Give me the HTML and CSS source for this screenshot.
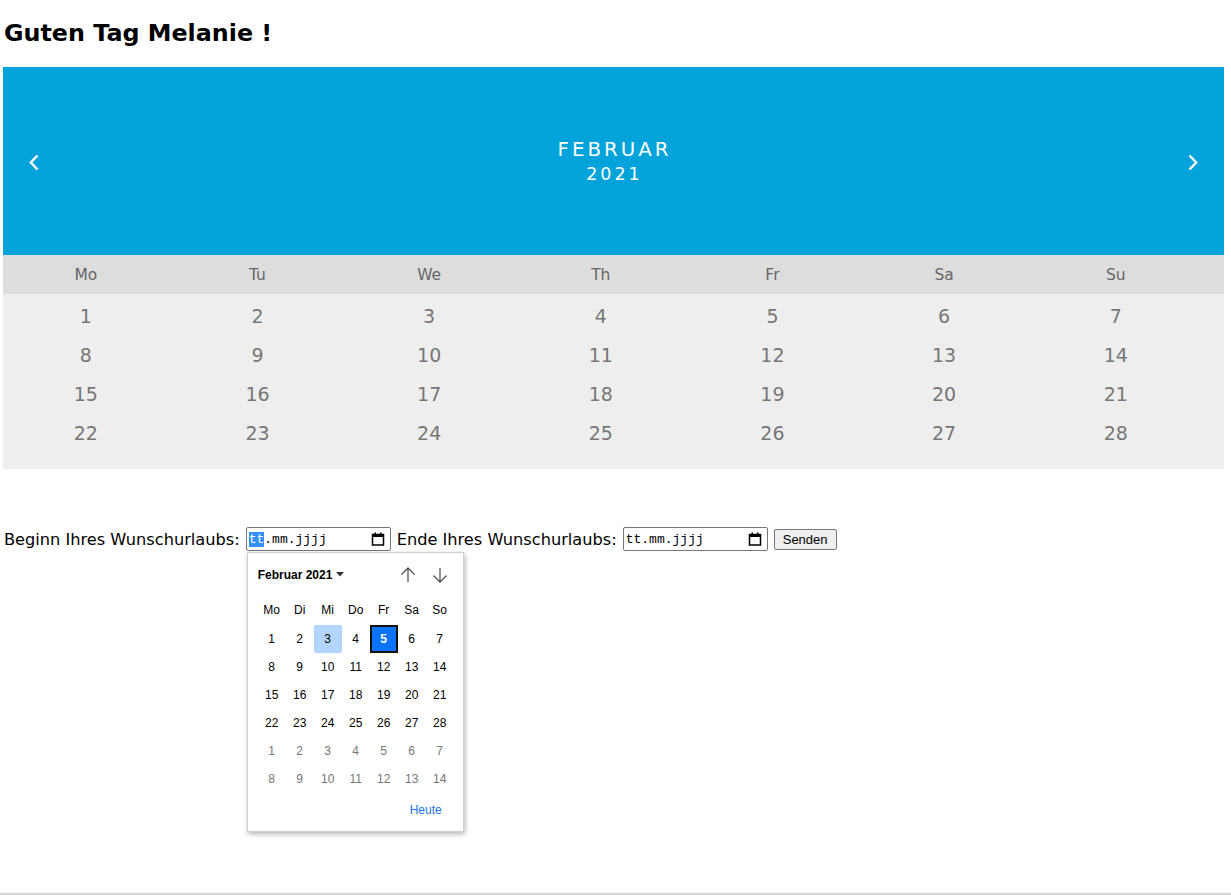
FILE: index.html
```html
<!DOCTYPE html>
<html lang="de">
<head>
<meta charset="utf-8">
<title>Kalender</title>
<link rel="stylesheet" href="styles.css">
</head>
<body>
<div class="page">
  <h1 class="title">Guten Tag Melanie !</h1>

  <div class="calendar">
    <div class="month">
      <svg class="nav" width="12" height="18" viewBox="0 0 12 18"><path d="M9.5 2.5L2.8 9.5l6.7 7" fill="none" stroke="#fff" stroke-width="2.4"/></svg>
      <div class="month-name">
        <div class="m">Februar</div>
        <div class="y">2021</div>
      </div>
      <svg class="nav" width="12" height="18" viewBox="0 0 12 18"><path d="M2.5 2.5l6.7 7-6.7 7" fill="none" stroke="#fff" stroke-width="2.4"/></svg>
    </div>
    <div class="weekdays">
      <div class="grid">
        <span>Mo</span><span>Tu</span><span>We</span><span>Th</span><span>Fr</span><span>Sa</span><span>Su</span>
      </div>
    </div>
    <div class="days">
      <div class="grid">
        <span>1</span><span>2</span><span>3</span><span>4</span><span>5</span><span>6</span><span>7</span>
        <span>8</span><span>9</span><span>10</span><span>11</span><span>12</span><span>13</span><span>14</span>
        <span>15</span><span>16</span><span>17</span><span>18</span><span>19</span><span>20</span><span>21</span>
        <span>22</span><span>23</span><span>24</span><span>25</span><span>26</span><span>27</span><span>28</span>
      </div>
    </div>
  </div>

  <form class="form">
    <label>Beginn Ihres Wunschurlaubs:</label>
    <div class="date-wrap">
      <div class="date-input">
        <span class="field"><span class="sel">tt</span>.mm.jjjj</span>
        <svg class="cal-icon" width="14" height="14" viewBox="0 0 14 14"><rect x="1.5" y="2.5" width="11" height="10.5" fill="none" stroke="#000" stroke-width="1.5"/><rect x="1" y="2" width="12" height="3" fill="#000"/><rect x="3.5" y="0.5" width="1.5" height="2" fill="#000"/><rect x="9" y="0.5" width="1.5" height="2" fill="#000"/></svg>
      </div>
      <div class="picker">
        <div class="picker-head">
          <span class="pm">Februar 2021 <svg width="8" height="5" viewBox="0 0 8 5"><path d="M0 0h8L4 4.5z" fill="#333"/></svg></span>
          <span class="arrows">
            <svg width="18" height="18" viewBox="0 0 18 18"><path d="M9 16V2M2.5 8.5L9 2l6.5 6.5" fill="none" stroke="#555" stroke-width="1.3"/></svg>
            <svg width="18" height="18" viewBox="0 0 18 18"><path d="M9 2v14M2.5 9.5L9 16l6.5-6.5" fill="none" stroke="#555" stroke-width="1.3"/></svg>
          </span>
        </div>
        <div class="pgrid">
          <span class="wd">Mo</span><span class="wd">Di</span><span class="wd">Mi</span><span class="wd">Do</span><span class="wd">Fr</span><span class="wd">Sa</span><span class="wd">So</span>
          <span>1</span><span>2</span><span class="today">3</span><span>4</span><span class="chosen">5</span><span>6</span><span>7</span>
          <span>8</span><span>9</span><span>10</span><span>11</span><span>12</span><span>13</span><span>14</span>
          <span>15</span><span>16</span><span>17</span><span>18</span><span>19</span><span>20</span><span>21</span>
          <span>22</span><span>23</span><span>24</span><span>25</span><span>26</span><span>27</span><span>28</span>
          <span class="out">1</span><span class="out">2</span><span class="out">3</span><span class="out">4</span><span class="out">5</span><span class="out">6</span><span class="out">7</span>
          <span class="out">8</span><span class="out">9</span><span class="out">10</span><span class="out">11</span><span class="out">12</span><span class="out">13</span><span class="out">14</span>
        </div>
        <div class="picker-foot"><span class="heute">Heute</span></div>
      </div>
    </div>
    <label>Ende Ihres Wunschurlaubs:</label>
    <div class="date-wrap">
      <div class="date-input">
        <span class="field">tt.mm.jjjj</span>
        <svg class="cal-icon" width="14" height="14" viewBox="0 0 14 14"><rect x="1.5" y="2.5" width="11" height="10.5" fill="none" stroke="#000" stroke-width="1.5"/><rect x="1" y="2" width="12" height="3" fill="#000"/><rect x="3.5" y="0.5" width="1.5" height="2" fill="#000"/><rect x="9" y="0.5" width="1.5" height="2" fill="#000"/></svg>
      </div>
    </div>
    <button type="button" class="btn">Senden</button>
  </form>

  <div class="bottom-line"></div>
</div>
</body>
</html>
```

FILE: styles.css
```css
* { box-sizing: border-box; }
html, body { margin: 0; padding: 0; background: #fff; }
body { font-family: "DejaVu Sans", Verdana, sans-serif; color: #000; }

.page {
  height: 895px;
  display: flex;
  flex-direction: column;
  overflow: hidden;
}

.title {
  margin: 19px 0 0 4px;
  font-size: 23.8px;
  font-weight: bold;
  line-height: 28px;
  height: 28px;
}

.calendar {
  margin: 20px 7px 0 3px;
}

.month {
  background: #02a3da;
  height: 188px;
  display: flex;
  align-items: center;
  justify-content: space-between;
  padding: 2px 25px 0 25px;
  color: #fff;
}
.nav { display: block; }
.month-name {
  text-align: center;
  text-transform: uppercase;
  letter-spacing: 3px;
  padding-left: 2px;
}
.month-name .m { font-size: 19.8px; line-height: 24px; }
.month-name .y { font-size: 17.5px; line-height: 24px; }

.grid {
  display: grid;
  grid-template-columns: repeat(7, 171.67px);
  margin-left: -3px;
  text-align: center;
}

.weekdays {
  background: #ddd;
  height: 39px;
  padding-top: 11px;
  color: #666;
  font-size: 15.5px;
  line-height: 19px;
}

.days {
  background: #eee;
  height: 175px;
  padding-top: 3px;
  color: #777;
  font-size: 19px;
}
.days .grid span { height: 39px; line-height: 39px; }

.form {
  margin: 58px 0 0 4px;
  display: flex;
  align-items: center;
  height: 24px;
  font-size: 16.2px;
}
.form label { margin-right: 6px; }
.date-wrap { position: relative; margin-right: 6px; }
.date-input {
  width: 145px;
  height: 24px;
  border: 1px solid #767676;
  border-radius: 2px;
  display: flex;
  align-items: center;
  justify-content: space-between;
  padding: 0 5px 0 1px;
  background: #fff;
}
.field {
  font-family: "Liberation Mono", "DejaVu Sans Mono", monospace;
  font-size: 13px;
  padding-left: 1px;
  line-height: 17px;
}
.sel { background: #3390ff; color: #fff; }
.cal-icon { display: block; }

.btn {
  font-family: "Liberation Sans", Arial, sans-serif;
  font-size: 13px;
  height: 21px;
  padding: 0 8px;
  background: #efefef;
  border: 1px solid #767676;
  border-radius: 2px;
  color: #000;
}

.picker {
  position: absolute;
  left: 1px;
  top: 25px;
  width: 217px;
  height: 280px;
  background: #fff;
  border: 1px solid #d0d0d0;
  box-shadow: 1px 2px 5px rgba(0,0,0,0.3);
  font-family: "Liberation Sans", Arial, sans-serif;
  font-size: 12px;
  color: #000;
  padding: 0 10px;
}
.picker-head {
  display: flex;
  justify-content: space-between;
  align-items: center;
  height: 43px;
}
.pm { font-weight: bold; display: flex; align-items: center; gap: 4px; }
.arrows { display: flex; gap: 14px; margin-right: 4px; }
.arrows svg { display: block; }
.pgrid {
  display: grid;
  grid-template-columns: repeat(7, 28px);
  grid-template-rows: 29px;
  grid-auto-rows: 28px;
  text-align: center;
}
.pgrid span { line-height: 28px; }
.pgrid .today { background: #b3d5fd; border-radius: 2px; }
.pgrid .chosen { background: #0a74ff; color: #fff; font-weight: bold; outline: 2px solid #111; outline-offset: -2px; }
.pgrid .out { color: #777; }
.picker-foot {
  text-align: right;
  padding: 10px 11px 0 0;
}
.heute { color: #1a73e8; }

.bottom-line {
  margin-top: auto;
  height: 2px;
  background: #d6d6d6;
}
```
